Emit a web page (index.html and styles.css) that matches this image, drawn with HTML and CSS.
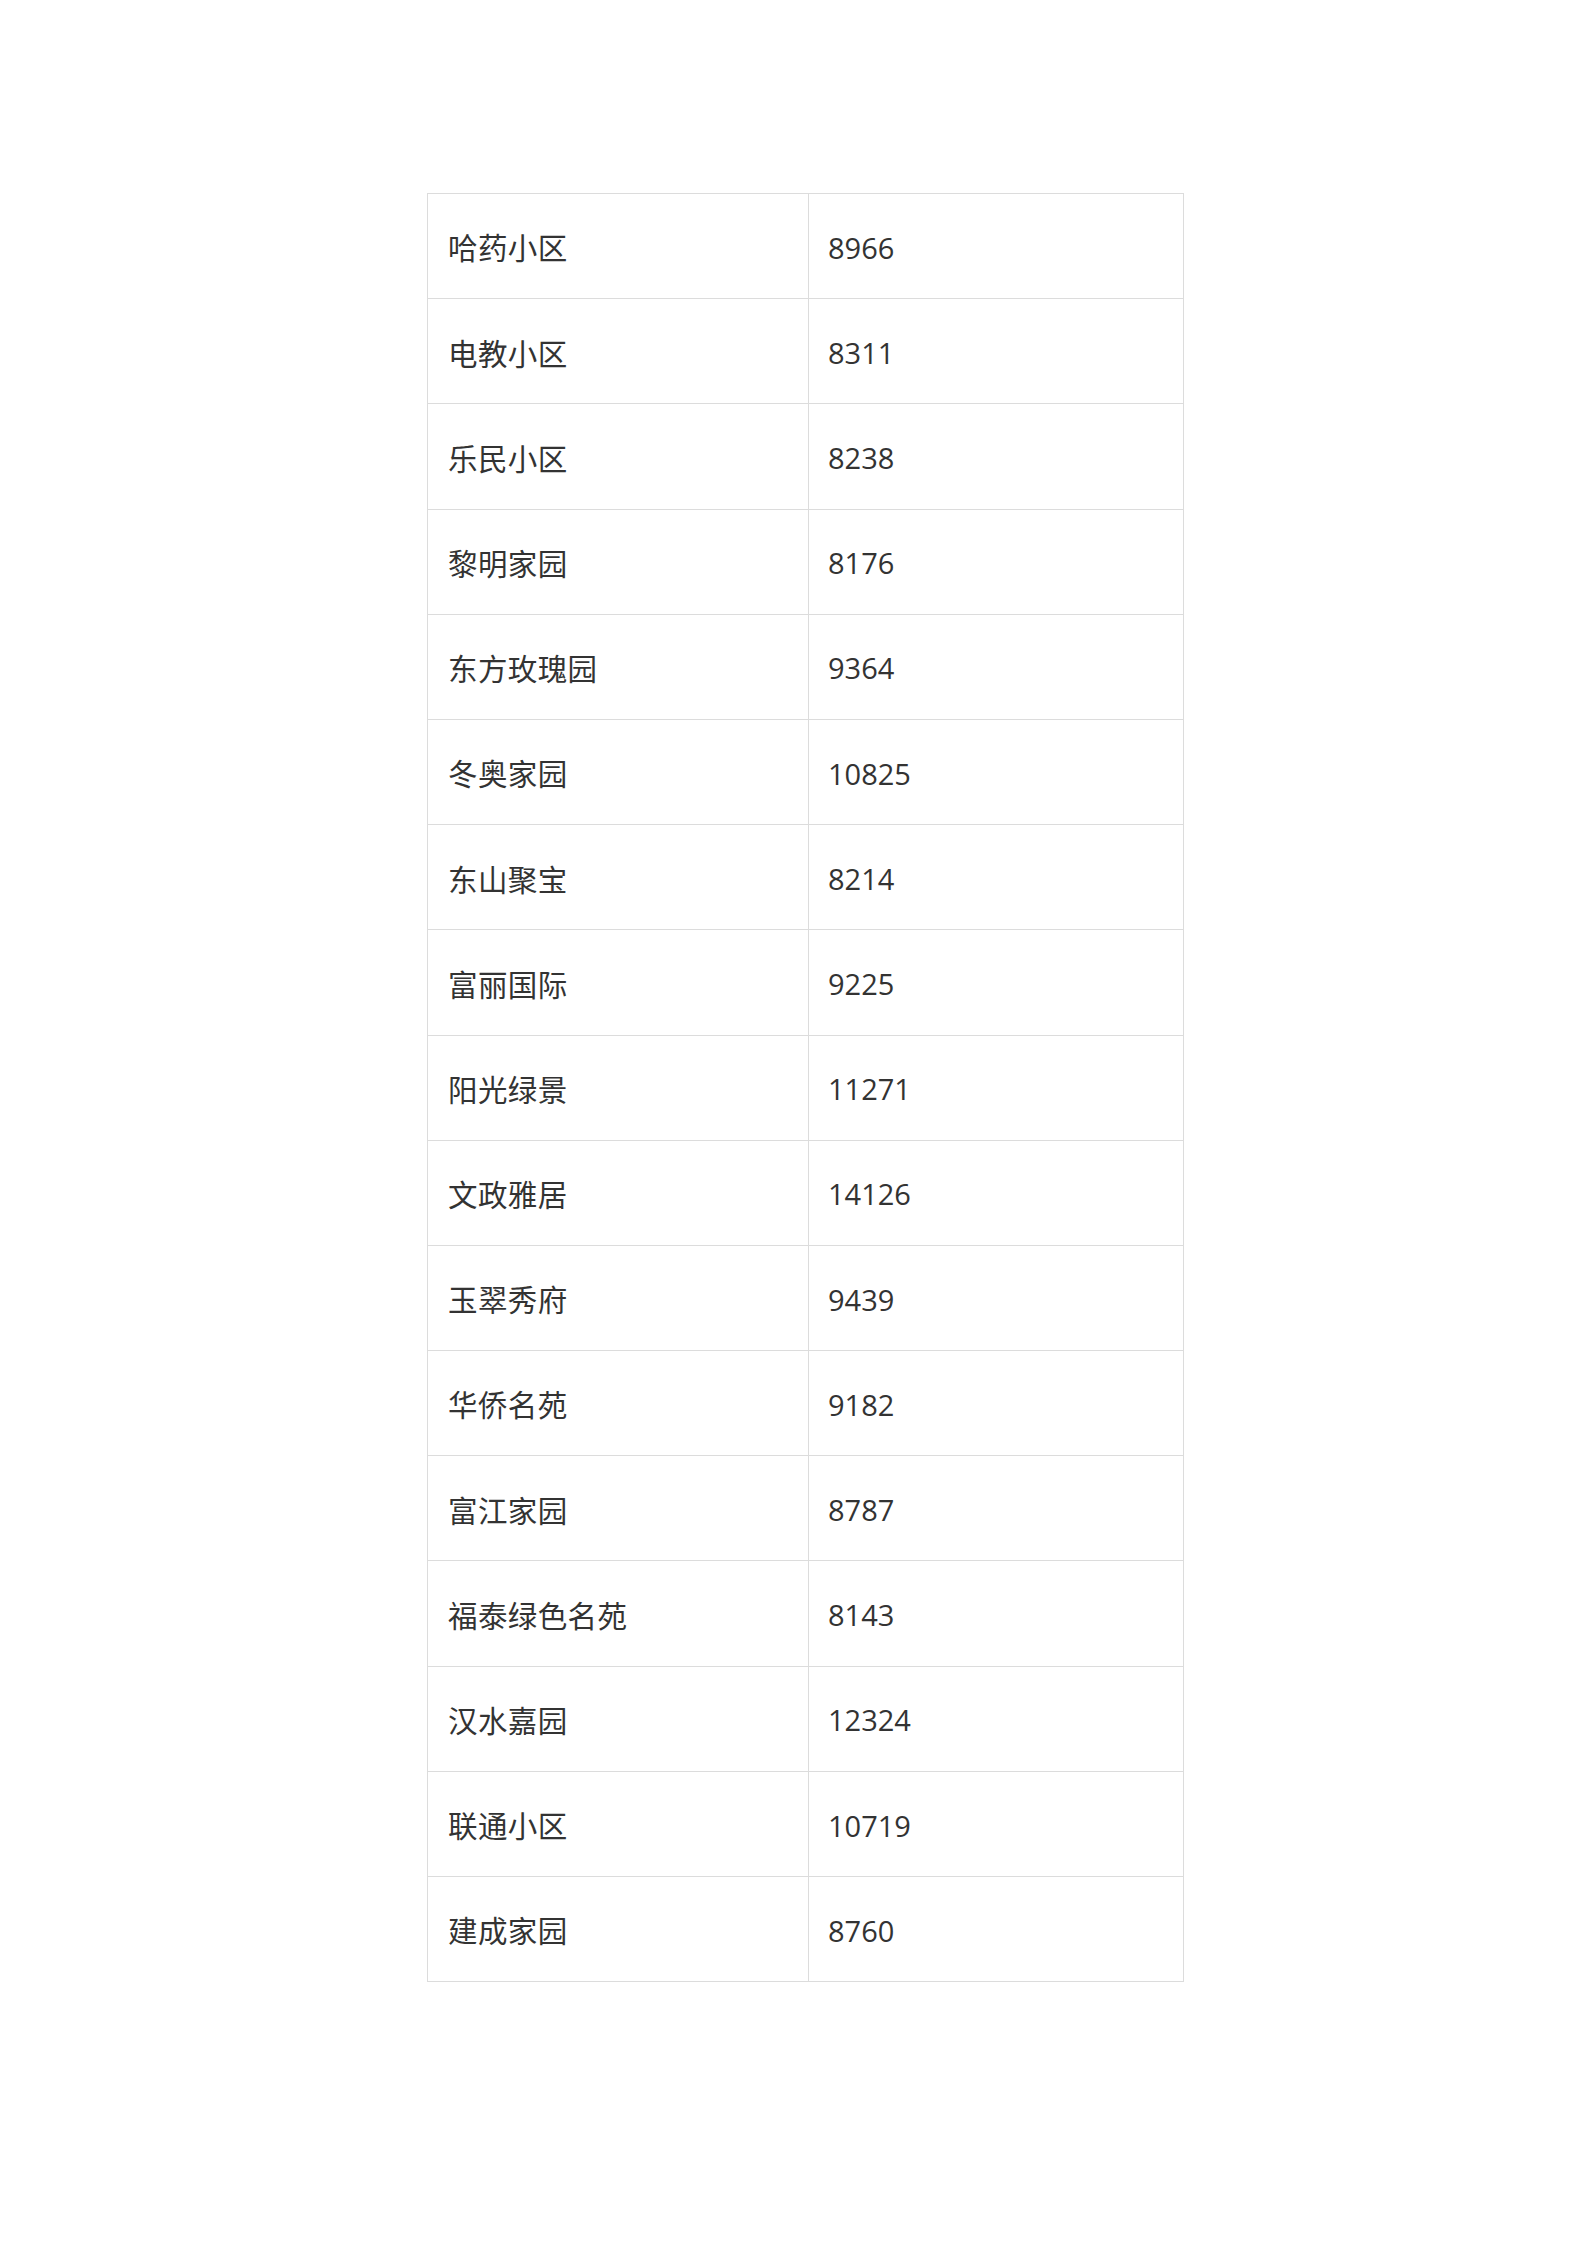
FILE: index.html
```html
<!DOCTYPE html>
<html lang="zh-CN">
<head>
<meta charset="utf-8">
<title>小区</title>
<link rel="stylesheet" href="styles.css">
</head>
<body>
<div class="page">
<table class="data">
<tbody>
<tr><td class="name">哈药小区</td><td class="num">8966</td></tr>
<tr><td class="name">电教小区</td><td class="num">8311</td></tr>
<tr><td class="name">乐民小区</td><td class="num">8238</td></tr>
<tr><td class="name">黎明家园</td><td class="num">8176</td></tr>
<tr><td class="name">东方玫瑰园</td><td class="num">9364</td></tr>
<tr><td class="name">冬奥家园</td><td class="num">10825</td></tr>
<tr><td class="name">东山聚宝</td><td class="num">8214</td></tr>
<tr><td class="name">富丽国际</td><td class="num">9225</td></tr>
<tr><td class="name">阳光绿景</td><td class="num">11271</td></tr>
<tr><td class="name">文政雅居</td><td class="num">14126</td></tr>
<tr><td class="name">玉翠秀府</td><td class="num">9439</td></tr>
<tr><td class="name">华侨名苑</td><td class="num">9182</td></tr>
<tr><td class="name">富江家园</td><td class="num">8787</td></tr>
<tr><td class="name">福泰绿色名苑</td><td class="num">8143</td></tr>
<tr><td class="name">汉水嘉园</td><td class="num">12324</td></tr>
<tr><td class="name">联通小区</td><td class="num">10719</td></tr>
<tr><td class="name">建成家园</td><td class="num">8760</td></tr>
</tbody>
</table>
</div>
</body>
</html>
```

FILE: styles.css
```css
html, body {
  margin: 0;
  padding: 0;
  background: #ffffff;
}

.page {
  padding: 193px 0 0 427px;
}

.data {
  border-collapse: collapse;
  width: 756px;
  table-layout: fixed;
  font-family: "Open Sans", "Noto Sans CJK SC", sans-serif;
  font-size: 29px;
  color: #333333;
}

.data td {
  border: 1px solid #dcdcdc;
  height: 105.2px;
  padding: 4px 19px 0 20px;
  box-sizing: border-box;
  vertical-align: middle;
  line-height: 1.2;
}

.data td.name {
  width: 381px;
  font-size: 29.5px;
  letter-spacing: 0.4px;
}

.data td.num {
  width: 375px;
  padding-left: 19px;
}
```
